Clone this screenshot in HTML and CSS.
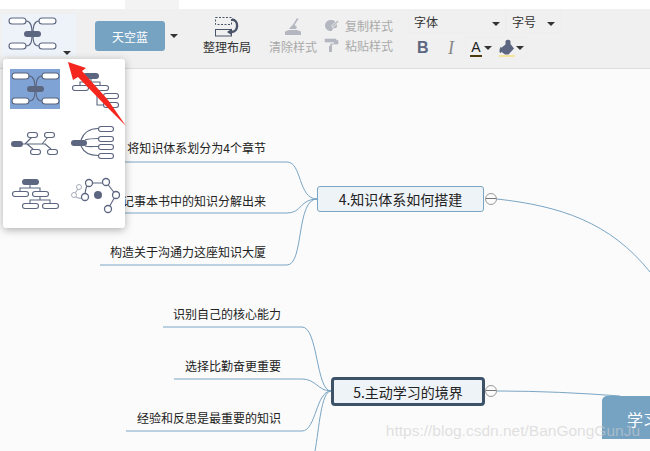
FILE: index.html
```html
<!DOCTYPE html>
<html lang="zh-CN">
<head>
    <meta charset="UTF-8">
    <title>思维导图</title>
    <link rel="stylesheet" href="styles.css">
</head>
<body>
    <svg class="defs" width="0" height="0">
        <symbol id="icon-map" viewBox="0 0 50 34">
            <path class="wire" d="M18 4C23 4 24 9 24 17C24 25 23 29 18 29M31 4C26 4 25 9 25 17C25 25 26 29 31 29"/>
            <rect class="pill" x="1" y="1" width="17" height="6" rx="3"/>
            <rect class="pill" x="31" y="1" width="17" height="6" rx="3"/>
            <rect class="pill" x="1" y="26" width="17" height="6" rx="3"/>
            <rect class="pill" x="31" y="26" width="17" height="6" rx="3"/>
            <rect class="pill-dark" x="16" y="14" width="17" height="6" rx="3"/>
        </symbol>
    </svg>

    <!-- top strip -->
    <div class="strip">
        <div class="strip-a"></div>
        <div class="strip-b"></div>
        <div class="strip-c"></div>
    </div>

    <!-- toolbar -->
    <div class="toolbar">
        <div class="layout-btn">
            <svg class="layout-icon"><use href="#icon-map"/></svg>
            <span class="caret layout-caret"></span>
        </div>

        <div class="theme-group">
            <button class="theme-btn">天空蓝</button>
            <span class="caret"></span>
        </div>

        <div class="tool-big tidy">
            <svg width="26" height="22" viewBox="0 0 26 22">
                <rect x="1.5" y="1.5" width="16" height="7" fill="none" stroke="#4a5468" stroke-dasharray="2 1.5"/>
                <rect x="1.5" y="13.5" width="16" height="6.5" fill="none" stroke="#4a5468"/>
                <path d="M18 3.500C25 4 25 16 17 16" fill="none" stroke="#4a5468" stroke-width="2.400"/>
                <path d="M18 12.500L13 16L18 19.500Z" fill="#4a5468"/>
            </svg>
            <span>整理布局</span>
        </div>

        <div class="tool-big clear">
            <svg width="18" height="20" viewBox="0 0 18 20">
                <path d="M13 2L14.500 3L10.500 9L13 11L12 13H5L7 10.500L9 8.500Z" fill="#b4b7c0"/>
                <path d="M1 19V15.500L5 14H13L17 15.500V19Z" fill="#b4b7c0"/>
            </svg>
            <span>清除样式</span>
        </div>

        <div class="style-tools">
            <div class="style-row">
                <svg width="15" height="13" viewBox="0 0 15 13">
                    <path d="M7 1C3 1 1 3.500 1 6.500C1 10 4 12 7 12C9 12 8 10 9 9.500C11 9 13 9.500 13 6.500C13 3 10 1 7 1Z" fill="#b4b7c0"/>
                    <path d="M14 2L8 8" stroke="#f0f0f0" stroke-width="2.500"/>
                    <path d="M14 2L8.500 7.500" stroke="#b4b7c0" stroke-width="1.500"/>
                </svg>
                <span>复制样式</span>
            </div>
            <div class="style-row">
                <svg width="15" height="14" viewBox="0 0 15 14">
                    <path d="M1 1H12V4H1ZM12 2.500H14V6H6.500V9" fill="#b4b7c0" stroke="#b4b7c0" stroke-width=".6"/>
                    <rect x="5" y="8" width="3" height="6" fill="#b4b7c0"/>
                </svg>
                <span>粘贴样式</span>
            </div>
        </div>

        <div class="font-tools">
            <div class="font-row">
                <div class="font-select family"><span>字体</span><span class="caret"></span></div>
                <div class="font-select size"><span>字号</span><span class="caret"></span></div>
            </div>
            <div class="format-row">
                <span class="fmt-b">B</span>
                <span class="fmt-i">I</span>
                <div class="fmt-color">
                    <span class="fmt-a">A</span>
                    <span class="caret"></span>
                </div>
                <div class="fmt-fill">
                    <svg width="16" height="17" viewBox="0 0 16 15">
                        <path d="M6.500 5V2C6.500 -.5 11.500 -.5 11.500 2V4.500L15 9L9.500 15H6L2 12V8.500Z" fill="#5d6680"/>
                        <path d="M2 7C0 9.500 0 13.500 1.500 13.500C3 13.500 3 9.500 2 7Z" fill="#5d6680"/>
                    </svg>
                    <span class="caret"></span>
                </div>
            </div>
        </div>
    </div>

    <!-- canvas -->
    <div class="canvas">
        <svg class="links" width="650" height="382" viewBox="0 69 650 382">
            <path d="M100 162H287C302 162 298 199 317 199"/>
            <path d="M100 213H287C302 213 300 199 317 199"/>
            <path d="M100 265H287C304 265 296 199 317 199"/>
            <path d="M163 327H302C318 327 316 391 331 391"/>
            <path d="M174 379H302C316 379 318 391 331 391"/>
            <path d="M126 431H302C316 431 316 391 331 391"/>
            <path d="M315 451C319 430 321 391 331 391"/>
            <path d="M497 199C560 206 610 222 650 272"/>
            <path d="M497 391C540 391 580 393 620 396"/>
        </svg>

        <span class="leaf leaf-1">将知识体系划分为4个章节</span>
        <span class="leaf leaf-2">把记事本书中的知识分解出来</span>
        <span class="leaf leaf-3">构造关于沟通力这座知识大厦</span>
        <span class="leaf leaf-4">识别自己的核心能力</span>
        <span class="leaf leaf-5">选择比勤奋更重要</span>
        <span class="leaf leaf-6">经验和反思是最重要的知识</span>

        <div class="topic topic-4">4.知识体系如何搭建</div>
        <span class="fold fold-4"></span>
        <div class="topic topic-5">5.主动学习的境界</div>
        <span class="fold fold-5"></span>

        <div class="root">学习</div>
        <div class="watermark">https://blog.csdn.net/BanGongGunJu</div>
    </div>

    <!-- layout menu -->
    <div class="layout-menu">
        <div class="layout-option selected">
            <svg class="option-map"><use href="#icon-map"/></svg>
        </div>
        <div class="layout-option">
            <svg width="50" height="40" viewBox="0 0 50 40">
                <path class="wire" d="M21 10V13H10V16M21 13H30V16M27 21V36H33M27 27H33"/>
                <rect class="pill-dark" x="13" y="4" width="16" height="6" rx="3"/>
                <rect class="pill" x="2.500" y="16.500" width="16" height="5" rx="2.500"/>
                <rect class="pill" x="22.500" y="16.500" width="16" height="5" rx="2.500"/>
                <rect class="pill" x="33.500" y="24.500" width="15" height="5" rx="2.500"/>
                <rect class="pill" x="33.500" y="33.500" width="15" height="5" rx="2.500"/>
            </svg>
        </div>
        <div class="layout-option">
            <svg width="50" height="40" viewBox="0 0 50 40">
                <path class="wire" d="M13 22H36M15 22L22 15M32 22L38 15M17 22L23 27M35 22L41 27"/>
                <rect class="pill-dark" x="1" y="19" width="12" height="6" rx="3"/>
                <rect class="pill" x="17.500" y="10.500" width="10" height="5" rx="2.500"/>
                <rect class="pill" x="34.500" y="10.500" width="10" height="5" rx="2.500"/>
                <rect class="pill" x="20.500" y="27.500" width="10" height="5" rx="2.500"/>
                <rect class="pill" x="37.500" y="27.500" width="10" height="5" rx="2.500"/>
            </svg>
        </div>
        <div class="layout-option">
            <svg width="50" height="40" viewBox="0 0 50 40">
                <path class="wire" d="M11 18C14 10 20 6.500 28 6.500M15 18C18 17 22 16.500 28 16.500M15 24C18 25 22 24.500 28 24.500M11 24C14 31 20 33.500 28 33.500"/>
                <rect class="pill-dark" x="1" y="18" width="16" height="6" rx="3"/>
                <rect class="pill" x="28.500" y="4.500" width="15" height="5" rx="2.500"/>
                <rect class="pill" x="28.500" y="14.500" width="15" height="5" rx="2.500"/>
                <rect class="pill" x="28.500" y="22.500" width="15" height="5" rx="2.500"/>
                <rect class="pill" x="28.500" y="31.500" width="15" height="5" rx="2.500"/>
            </svg>
        </div>
        <div class="layout-option">
            <svg width="50" height="40" viewBox="0 0 50 40">
                <path class="wire" d="M20 10V13H10V16M20 13H30V16M30 21V25H20V28M30 25H40V28"/>
                <rect class="pill-dark" x="12" y="4" width="17" height="6" rx="3"/>
                <rect class="pill" x="2.500" y="16.500" width="16" height="5" rx="2.500"/>
                <rect class="pill" x="22.500" y="16.500" width="16" height="5" rx="2.500"/>
                <rect class="pill" x="12.500" y="28.500" width="16" height="5" rx="2.500"/>
                <rect class="pill" x="32.500" y="28.500" width="16" height="5" rx="2.500"/>
            </svg>
        </div>
        <div class="layout-option">
            <svg width="50" height="40" viewBox="0 0 50 40">
                <path class="wire" d="M15 22C15 15 16 11 19 8M19 8H36M36 7L46 20M46 20L38 34"/>
                <path class="wire-light" d="M4 20L9 12M4 20C7 24 11 24 15 22"/>
                <circle class="ring" cx="19" cy="8" r="3.500"/>
                <circle class="ring" cx="36" cy="7" r="3.500"/>
                <circle class="ring" cx="46" cy="20" r="3.500"/>
                <circle class="ring" cx="38" cy="34" r="3.500"/>
                <circle class="ring" cx="15" cy="22" r="3.500"/>
                <circle class="ring-light" cx="4" cy="20" r="2.500"/>
                <circle class="ring-light" cx="9" cy="12" r="2.500"/>
                <circle class="dot" cx="28" cy="20" r="4"/>
            </svg>
        </div>
    </div>

    <!-- red arrow drawn over the screenshot -->
    <svg class="red-arrow" width="60" height="66" viewBox="0 0 60 66">
        <path d="M0 0L18 6L14 9L40 38L58 64L36 42L10 15L5 18Z" fill="#f5261e"/>
    </svg>
</body>
</html>
```

FILE: styles.css
```css
* {
    box-sizing: border-box;
}
body {
    font-family: "Noto Sans CJK SC", "Liberation Sans", sans-serif;
    font-size: 12px;
    margin: 0;
    height: 451px;
    overflow: hidden;
    display: flex;
    flex-direction: column;
    position: relative;
    color: #333;
    background-color: #fbfbfb;
}
.defs {
    position: absolute;
}

/* top strip */
.strip {
    display: flex;
    height: 9px;
    flex: none;
}
.strip-a {
    width: 125px;
    background-color: #fff;
}
.strip-b {
    width: 54px;
    background-color: #f3f3f3;
}
.strip-c {
    flex: 1;
    background-color: #fff;
}

/* toolbar */
.toolbar {
    display: flex;
    align-items: flex-start;
    height: 60px;
    flex: none;
    background-color: #f0f0f0;
    border-bottom: 1px solid #dcdcdc;
}
.caret {
    display: inline-block;
    width: 0;
    height: 0;
    flex: none;
    border-left: 4px solid transparent;
    border-right: 4px solid transparent;
    border-top: 4px solid #333;
}
.wire, .wire-light {
    fill: none;
    stroke: #5d6680;
    stroke-width: 1.100;
}
.wire-light {
    stroke: #a9adba;
}
.pill {
    fill: #fff;
    stroke: #5d6680;
    stroke-width: 1.100;
}
.pill-dark {
    fill: #5d6680;
}
.ring {
    fill: #fff;
    stroke: #5d6680;
    stroke-width: 1.300;
}
.ring-light {
    fill: #fff;
    stroke: #a9adba;
}
.dot {
    fill: #5d6680;
}
.layout-btn {
    position: relative;
    width: 74px;
    height: 42px;
    margin: 5px 0 0 2px;
    padding: 3px 0 0 6px;
    background-color: #eef3fa;
}
.layout-icon {
    display: block;
    width: 50px;
    height: 34px;
}
.layout-caret {
    position: absolute;
    right: 5px;
    bottom: 1px;
}
.theme-group {
    display: flex;
    align-items: center;
    gap: 5px;
    margin: 12px 0 0 19px;
}
.theme-btn {
    width: 70px;
    height: 30px;
    padding: 0;
    border: 0;
    border-radius: 3px;
    font-family: inherit;
    font-size: 12px;
    color: #fff;
    background-color: #76a3c2;
}
.tool-big {
    display: flex;
    flex-direction: column;
    align-items: center;
    width: 48px;
    height: 50px;
}
.tool-big span {
    line-height: 18px;
}
.tidy {
    margin: 7px 0 0 25px;
}
.clear {
    margin: 7px 0 0 18px;
    color: #aaa;
}
.clear span {
    margin-top: 2px;
}
.style-tools {
    display: flex;
    flex-direction: column;
    gap: 2px;
    margin: 7px 0 0 7px;
    color: #aaa;
}
.style-row {
    display: flex;
    align-items: center;
    gap: 6px;
    height: 18px;
}
.font-tools {
    margin: 1px 0 0 15px;
}
.font-row {
    display: flex;
}
.font-select {
    display: flex;
    justify-content: space-between;
    align-items: center;
    height: 23px;
    padding: 0 5px;
    border: 1px solid #eee;
}
.font-select .caret {
    margin-top: 5px;
}
.family {
    width: 98px;
}
.size {
    width: 55px;
}
.format-row {
    display: flex;
    align-items: center;
    height: 24px;
    margin-top: 3px;
    color: #5d6680;
}
.fmt-b {
    width: 13px;
    margin-left: 9px;
    font-family: "Liberation Sans", sans-serif;
    font-size: 16px;
    font-weight: bold;
}
.fmt-i {
    width: 7px;
    margin-left: 18px;
    font-family: "Liberation Serif", serif;
    font-size: 18px;
    font-style: italic;
    color: #888;
}
.fmt-color, .fmt-fill {
    display: flex;
    align-items: center;
    height: 22px;
    border: 1px solid #eee;
}
.fmt-color {
    width: 29px;
    gap: 2px;
    margin-left: 10px;
    padding-left: 4px;
}
.fmt-a {
    width: 12px;
    height: 18px;
    font-family: "Liberation Sans", sans-serif;
    font-size: 14px;
    line-height: 16px;
    text-align: center;
    color: #222;
    border-bottom: 2px solid #4a3a10;
}
.fmt-fill {
    width: 30px;
    gap: 1px;
    margin-left: 3px;
    padding-left: 1px;
}
.fmt-fill svg {
    height: 18px;
    border-bottom: 2px solid #f2e49a;
}

/* canvas: nodes sit on a free mind map surface */
.canvas {
    position: relative;
    flex: 1;
    overflow: hidden;
    background-color: #fbfbfb;
}
.links {
    position: absolute;
    top: 0;
    left: 0;
}
.links path {
    fill: none;
    stroke: #7aa5c4;
    stroke-width: 1;
}
.leaf {
    position: absolute;
    right: 384px;
    line-height: 16px;
    white-space: nowrap;
    color: #222;
}
.leaf-1 { top: 71px; }
.leaf-2 { top: 124px; }
.leaf-3 { top: 175px; }
.leaf-4 { top: 237px; right: 369px; }
.leaf-5 { top: 289px; right: 369px; }
.leaf-6 { top: 341px; right: 369px; }
.topic {
    position: absolute;
    display: flex;
    align-items: center;
    justify-content: center;
    font-size: 14px;
    color: #222;
    background-color: #eef3f7;
}
.topic-4 {
    left: 317px;
    top: 117px;
    width: 167px;
    height: 26px;
    border: 1px solid #7aa5c4;
    border-radius: 3px;
}
.topic-5 {
    left: 331px;
    top: 308px;
    width: 154px;
    height: 29px;
    border: 3px solid #3d5266;
    border-radius: 4px;
}
.fold {
    position: absolute;
    left: 485px;
    width: 12px;
    height: 12px;
    border: 1px solid #999;
    border-radius: 50%;
    background: linear-gradient(#fbfbfb 4.500px, #777 4.500px, #777 5.500px, #fbfbfb 5.500px);
}
.fold-4 { top: 124px; }
.fold-5 { top: 316px; }
.root {
    position: absolute;
    left: 602px;
    top: 327px;
    width: 80px;
    height: 43px;
    padding: 13px 0 0 25px;
    border-radius: 5px 0 0 0;
    font-size: 16px;
    line-height: 20px;
    color: #fff;
    background-color: #76a3c2;
}
.watermark {
    position: absolute;
    right: 10px;
    top: 352px;
    font-family: "Liberation Sans", sans-serif;
    font-size: 15.500px;
    line-height: 20px;
    color: rgba(205, 205, 205, 0.6);
}

/* layout dropdown */
.layout-menu {
    position: absolute;
    left: 3px;
    top: 59px;
    width: 122px;
    height: 169px;
    display: grid;
    grid-template-columns: 50px 50px;
    grid-auto-rows: 40px;
    column-gap: 10px;
    row-gap: 13px;
    padding: 10px 7px;
    border-radius: 3px;
    background-color: #fff;
    box-shadow: 0 2px 8px rgba(0, 0, 0, 0.3);
}
.layout-option svg {
    display: block;
}
.layout-option.selected {
    background-color: #7fa3d5;
}
.option-map {
    width: 50px;
    height: 34px;
    margin-top: 3px;
    margin-left: 1px;
    overflow: visible;
}
.red-arrow {
    position: absolute;
    left: 68px;
    top: 62px;
}
```
